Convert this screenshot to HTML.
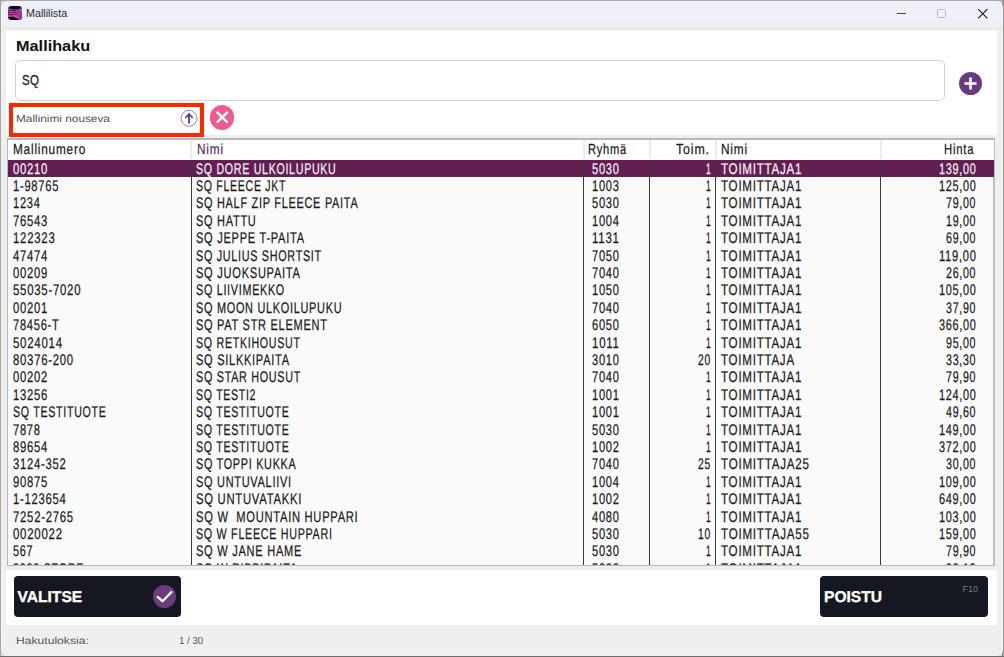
<!DOCTYPE html>
<html><head><meta charset="utf-8">
<style>
*{margin:0;padding:0;box-sizing:border-box}
html,body{width:1004px;height:657px;overflow:hidden;background:#d8d8d8;font-family:"Liberation Sans",sans-serif}
#bgtop{position:absolute;left:0;top:0;width:1004px;height:1px;background:#a8a8a6}
#bgleft{position:absolute;left:0;top:0;width:1px;height:657px;background:#a9a49e}
#bgright{position:absolute;left:1002px;top:0;width:2px;height:657px;background:#9c968e}
#bgbot{position:absolute;left:0;top:656px;width:1004px;height:1px;background:#6e6e6e}
#win{position:absolute;left:1px;top:1px;width:1001.5px;height:655px;background:#efefef;border:1px solid #f4f4f4;border-top-color:#f2f4fa;border-radius:7px;overflow:hidden}
#title{position:absolute;left:0;top:0;width:1001px;height:25px;background:linear-gradient(#eef1f9 0,#eef1f9 18px,#eef0f5 20px,#eef0f5 100%)}
#icon{position:absolute;left:8px;top:6px;width:14px;height:14px;border-radius:3.5px;background:#0c0c0c;overflow:hidden}
#ttext{position:absolute;left:25.9px;top:5.3px;font-size:11.2px;color:#2a2a2a;line-height:16px;transform:scaleX(0.96);transform-origin:0 0}
.white{position:absolute;background:#fff}
#hak{position:absolute;left:15.8px;top:37.0px;font-size:15.5px;font-weight:bold;color:#111;line-height:18px;transform:scaleX(1.05);transform-origin:0 0}
#inp{position:absolute;left:14.5px;top:59.5px;width:930px;height:41px;border:1px solid #d4d4d4;border-radius:5px;background:#fff}
#inptext{position:absolute;left:21.6px;top:71px;font-size:15px;color:#222;line-height:18px;transform:scaleX(0.77);transform-origin:0 0;-webkit-text-stroke:0.3px #222;letter-spacing:0.5px}
.circ{position:absolute;border-radius:50%}
#plus{left:959.2px;top:72.4px;width:23px;height:23px;background:#6a3a7e}
#sortbox{position:absolute;left:9px;top:103px;width:195px;height:34px;border:4px solid #ff2600;background:#fff}
#sorttext{position:absolute;left:16.4px;top:113.2px;font-size:10.2px;color:#505050;line-height:13px;transform:scaleX(1.16);transform-origin:0 0;text-rendering:geometricPrecision}
#pink{left:209.6px;top:105.3px;width:24.5px;height:24.5px;background:#ee5a93}
#table{position:absolute;left:7.0px;top:138px;width:988.0px;height:428px;background:#fafafa;border:1px solid #b4b8bd;border-top:2px solid #b5b8bc;border-right:2px solid #bcc0c5;overflow:hidden}
#hdrbg{position:absolute;left:8.0px;top:140px;width:986.0px;height:19.5px;background:#fff}
.selrow{position:absolute;left:8.0px;width:986.0px;background:#631e52}
.t{position:absolute;font-size:15.4px;line-height:17.217px;color:#1a1a1a;white-space:nowrap;transform-origin:0 0;-webkit-text-stroke:0.25px currentColor;text-rendering:geometricPrecision}
.hdiv{position:absolute;top:140px;height:19px;width:2px;background:#ececec}
.bdiv{position:absolute;top:159.5px;height:405.5px;width:1px;background:#3a3a3a}
.btn{position:absolute;top:576px;height:41px;background:#151820;border-radius:4px}
.btext{position:absolute;top:589.4px;font-size:15.6px;font-weight:bold;color:#fff;line-height:18px;text-rendering:geometricPrecision;-webkit-text-stroke:0.3px #fff;transform:scaleX(1.0);transform-origin:0 0}
#foot1{position:absolute;left:16.3px;top:635px;font-size:10.2px;color:#555;line-height:13px;transform:scaleX(1.19);transform-origin:0 0;text-rendering:geometricPrecision}
#foot2{position:absolute;left:179px;top:635px;font-size:10.2px;color:#555;line-height:13px;transform:scaleX(0.95);transform-origin:0 0;text-rendering:geometricPrecision}
#cliptable{position:absolute;left:0;top:0;width:1004px;height:657px;clip-path:inset(140px 9px 92px 8px)}
</style></head><body>
<div id="bgtop"></div><div id="bgleft"></div><div id="bgright"></div><div id="bgbot"></div>
<div id="win">
  <div id="title"></div>
</div>
<div id="icon">
 <svg width="14" height="14" viewBox="0 0 14 14">
  <defs><linearGradient id="ig" x1="0" y1="0" x2="1" y2="0"><stop offset="0" stop-color="#c63c94"/><stop offset="0.5" stop-color="#c94ab8"/><stop offset="1" stop-color="#a845c8"/></linearGradient></defs>
  <path d="M0 2 Q7 5.5 14 2 L14 14 L11.5 14 Q8 11 5 11 L0 11 Z" fill="url(#ig)"/>
  <g stroke="#2a0a28" stroke-width="0.7" fill="none" opacity="0.85">
   <path d="M0 4.5 H7 M0 6.5 H8 M0 8.5 H8.5"/>
   <path d="M5 4 L13 13 M7 3.8 L14 11.5 M9.5 3.6 L14 8.5 M3 9.5 L9 14"/>
  </g>
 </svg>
</div>
<div id="ttext">Mallilista</div>
<svg style="position:absolute;left:0;top:0" width="1004" height="30">
  <line x1="897" y1="13.5" x2="906" y2="13.5" stroke="#444" stroke-width="1"/>
  <rect x="937.5" y="9.5" width="8" height="8" rx="1" fill="none" stroke="#b8b8b8" stroke-width="1"/>
  <path d="M978.2 9.2 L987.4 18.4 M987.4 9.2 L978.2 18.4" stroke="#1a1a1a" stroke-width="1.15"/>
</svg>
<div style="position:absolute;left:2px;top:27px;width:1000px;height:3px;background:#e9e9e9"></div>
<div class="white" style="left:6px;top:30px;width:991px;height:105px"></div>
<div class="white" style="left:6px;top:570px;width:991px;height:55px"></div>
<div id="hak">Mallihaku</div>
<div id="inp"></div>
<div id="inptext">SQ</div>
<div class="circ" id="plus"></div>
<svg style="position:absolute;left:959.2px;top:72.4px" width="23" height="23"><path d="M11.5 5.5 V17.5 M5.5 11.5 H17.5" stroke="#fff" stroke-width="2.6"/></svg>
<div id="sortbox"></div>
<div id="sorttext">Mallinimi nouseva</div>
<svg style="position:absolute;left:179px;top:108px" width="20" height="20">
  <circle cx="10" cy="10.3" r="8" fill="none" stroke="#9a86c0" stroke-width="1"/>
  <path d="M10 15.5 V6.5" stroke="#5a3a94" stroke-width="1.8"/>
  <path d="M6.3 10 L10 6 L13.7 10" fill="none" stroke="#5a3a94" stroke-width="1.8"/>
</svg>
<div class="circ" id="pink"></div>
<svg style="position:absolute;left:209.6px;top:105.3px" width="24.5" height="24.5"><path d="M6.8 6.8 L17.7 17.7 M17.7 6.8 L6.8 17.7" stroke="#fff" stroke-width="2.4"/></svg>
<div id="table"></div>
<div id="hdrbg"></div>
<div class="selrow" style="top:159.6px;height:17.0px"></div>
<div class="hdiv" style="left:190px"></div><div class="bdiv" style="left:190.5px"></div><div class="hdiv" style="left:582.5px"></div><div class="bdiv" style="left:583.0px"></div><div class="hdiv" style="left:648.5px"></div><div class="bdiv" style="left:649.0px"></div><div class="hdiv" style="left:714.5px"></div><div class="bdiv" style="left:715.0px"></div><div class="hdiv" style="left:879.5px"></div><div class="bdiv" style="left:880.0px"></div>
<div id="cliptable">
<div class="t" style="left:13.20px;top:160.55px;transform:scaleX(0.7334);letter-spacing:1.0px;color:#f4f0f4;">00210</div>
<div class="t" style="left:196.40px;top:160.55px;transform:scaleX(0.6926);letter-spacing:1.0px;color:#f4f0f4;">SQ DORE ULKOILUPUKU</div>
<div class="t" style="left:591.50px;top:160.55px;transform:scaleX(0.7230);letter-spacing:1.0px;color:#f4f0f4;">5030</div>
<div class="t" style="left:705.86px;top:160.55px;transform:scaleX(0.5537);letter-spacing:1.0px;color:#f4f0f4;">1</div>
<div class="t" style="left:721.00px;top:160.55px;transform:scaleX(0.7528);letter-spacing:1.0px;color:#f4f0f4;">TOIMITTAJA1</div>
<div class="t" style="left:938.57px;top:160.55px;transform:scaleX(0.7087);letter-spacing:1.0px;color:#f4f0f4;">139,00</div>
<div class="t" style="left:13.20px;top:177.95px;transform:scaleX(0.7259);letter-spacing:1.0px;">1-98765</div>
<div class="t" style="left:196.40px;top:177.95px;transform:scaleX(0.6885);letter-spacing:1.0px;">SQ FLEECE JKT</div>
<div class="t" style="left:591.50px;top:177.95px;transform:scaleX(0.7230);letter-spacing:1.0px;">1003</div>
<div class="t" style="left:705.86px;top:177.95px;transform:scaleX(0.5537);letter-spacing:1.0px;">1</div>
<div class="t" style="left:721.00px;top:177.95px;transform:scaleX(0.7528);letter-spacing:1.0px;">TOIMITTAJA1</div>
<div class="t" style="left:938.57px;top:177.95px;transform:scaleX(0.7087);letter-spacing:1.0px;">125,00</div>
<div class="t" style="left:13.20px;top:195.35px;transform:scaleX(0.7230);letter-spacing:1.0px;">1234</div>
<div class="t" style="left:196.40px;top:195.35px;transform:scaleX(0.7112);letter-spacing:1.0px;">SQ HALF ZIP FLEECE PAITA</div>
<div class="t" style="left:591.50px;top:195.35px;transform:scaleX(0.7230);letter-spacing:1.0px;">5030</div>
<div class="t" style="left:705.86px;top:195.35px;transform:scaleX(0.5537);letter-spacing:1.0px;">1</div>
<div class="t" style="left:721.00px;top:195.35px;transform:scaleX(0.7528);letter-spacing:1.0px;">TOIMITTAJA1</div>
<div class="t" style="left:945.97px;top:195.35px;transform:scaleX(0.6943);letter-spacing:1.0px;">79,00</div>
<div class="t" style="left:13.20px;top:212.75px;transform:scaleX(0.7334);letter-spacing:1.0px;">76543</div>
<div class="t" style="left:196.40px;top:212.75px;transform:scaleX(0.7140);letter-spacing:1.0px;">SQ HATTU</div>
<div class="t" style="left:591.50px;top:212.75px;transform:scaleX(0.7230);letter-spacing:1.0px;">1004</div>
<div class="t" style="left:705.86px;top:212.75px;transform:scaleX(0.5537);letter-spacing:1.0px;">1</div>
<div class="t" style="left:721.00px;top:212.75px;transform:scaleX(0.7528);letter-spacing:1.0px;">TOIMITTAJA1</div>
<div class="t" style="left:945.97px;top:212.75px;transform:scaleX(0.6943);letter-spacing:1.0px;">19,00</div>
<div class="t" style="left:13.20px;top:230.15px;transform:scaleX(0.7403);letter-spacing:1.0px;">122323</div>
<div class="t" style="left:196.40px;top:230.15px;transform:scaleX(0.7197);letter-spacing:1.0px;">SQ JEPPE T-PAITA</div>
<div class="t" style="left:591.50px;top:230.15px;transform:scaleX(0.7462);letter-spacing:1.0px;">1131</div>
<div class="t" style="left:705.86px;top:230.15px;transform:scaleX(0.5537);letter-spacing:1.0px;">1</div>
<div class="t" style="left:721.00px;top:230.15px;transform:scaleX(0.7528);letter-spacing:1.0px;">TOIMITTAJA1</div>
<div class="t" style="left:945.97px;top:230.15px;transform:scaleX(0.6943);letter-spacing:1.0px;">69,00</div>
<div class="t" style="left:13.20px;top:247.55px;transform:scaleX(0.7334);letter-spacing:1.0px;">47474</div>
<div class="t" style="left:196.40px;top:247.55px;transform:scaleX(0.7016);letter-spacing:1.0px;">SQ JULIUS SHORTSIT</div>
<div class="t" style="left:591.50px;top:247.55px;transform:scaleX(0.7230);letter-spacing:1.0px;">7050</div>
<div class="t" style="left:705.86px;top:247.55px;transform:scaleX(0.5537);letter-spacing:1.0px;">1</div>
<div class="t" style="left:721.00px;top:247.55px;transform:scaleX(0.7528);letter-spacing:1.0px;">TOIMITTAJA1</div>
<div class="t" style="left:938.57px;top:247.55px;transform:scaleX(0.7248);letter-spacing:1.0px;">119,00</div>
<div class="t" style="left:13.20px;top:264.95px;transform:scaleX(0.7334);letter-spacing:1.0px;">00209</div>
<div class="t" style="left:196.40px;top:264.95px;transform:scaleX(0.7211);letter-spacing:1.0px;">SQ JUOKSUPAITA</div>
<div class="t" style="left:591.50px;top:264.95px;transform:scaleX(0.7230);letter-spacing:1.0px;">7040</div>
<div class="t" style="left:705.86px;top:264.95px;transform:scaleX(0.5537);letter-spacing:1.0px;">1</div>
<div class="t" style="left:721.00px;top:264.95px;transform:scaleX(0.7528);letter-spacing:1.0px;">TOIMITTAJA1</div>
<div class="t" style="left:945.97px;top:264.95px;transform:scaleX(0.6943);letter-spacing:1.0px;">26,00</div>
<div class="t" style="left:13.20px;top:282.35px;transform:scaleX(0.7410);letter-spacing:1.0px;">55035-7020</div>
<div class="t" style="left:196.40px;top:282.35px;transform:scaleX(0.7017);letter-spacing:1.0px;">SQ LIIVIMEKKO</div>
<div class="t" style="left:591.50px;top:282.35px;transform:scaleX(0.7230);letter-spacing:1.0px;">1050</div>
<div class="t" style="left:705.86px;top:282.35px;transform:scaleX(0.5537);letter-spacing:1.0px;">1</div>
<div class="t" style="left:721.00px;top:282.35px;transform:scaleX(0.7528);letter-spacing:1.0px;">TOIMITTAJA1</div>
<div class="t" style="left:938.57px;top:282.35px;transform:scaleX(0.7087);letter-spacing:1.0px;">105,00</div>
<div class="t" style="left:13.20px;top:299.75px;transform:scaleX(0.7334);letter-spacing:1.0px;">00201</div>
<div class="t" style="left:196.40px;top:299.75px;transform:scaleX(0.7089);letter-spacing:1.0px;">SQ MOON ULKOILUPUKU</div>
<div class="t" style="left:591.50px;top:299.75px;transform:scaleX(0.7230);letter-spacing:1.0px;">7040</div>
<div class="t" style="left:705.86px;top:299.75px;transform:scaleX(0.5537);letter-spacing:1.0px;">1</div>
<div class="t" style="left:721.00px;top:299.75px;transform:scaleX(0.7528);letter-spacing:1.0px;">TOIMITTAJA1</div>
<div class="t" style="left:945.97px;top:299.75px;transform:scaleX(0.6943);letter-spacing:1.0px;">37,90</div>
<div class="t" style="left:13.20px;top:317.15px;transform:scaleX(0.7235);letter-spacing:1.0px;">78456-T</div>
<div class="t" style="left:196.40px;top:317.15px;transform:scaleX(0.7154);letter-spacing:1.0px;">SQ PAT STR ELEMENT</div>
<div class="t" style="left:591.50px;top:317.15px;transform:scaleX(0.7230);letter-spacing:1.0px;">6050</div>
<div class="t" style="left:705.86px;top:317.15px;transform:scaleX(0.5537);letter-spacing:1.0px;">1</div>
<div class="t" style="left:721.00px;top:317.15px;transform:scaleX(0.7528);letter-spacing:1.0px;">TOIMITTAJA1</div>
<div class="t" style="left:938.57px;top:317.15px;transform:scaleX(0.7087);letter-spacing:1.0px;">366,00</div>
<div class="t" style="left:13.20px;top:334.55px;transform:scaleX(0.7452);letter-spacing:1.0px;">5024014</div>
<div class="t" style="left:196.40px;top:334.55px;transform:scaleX(0.6942);letter-spacing:1.0px;">SQ RETKIHOUSUT</div>
<div class="t" style="left:591.50px;top:334.55px;transform:scaleX(0.7462);letter-spacing:1.0px;">1011</div>
<div class="t" style="left:705.86px;top:334.55px;transform:scaleX(0.5537);letter-spacing:1.0px;">1</div>
<div class="t" style="left:721.00px;top:334.55px;transform:scaleX(0.7528);letter-spacing:1.0px;">TOIMITTAJA1</div>
<div class="t" style="left:945.97px;top:334.55px;transform:scaleX(0.6943);letter-spacing:1.0px;">95,00</div>
<div class="t" style="left:13.20px;top:351.95px;transform:scaleX(0.7372);letter-spacing:1.0px;">80376-200</div>
<div class="t" style="left:196.40px;top:351.95px;transform:scaleX(0.7176);letter-spacing:1.0px;">SQ SILKKIPAITA</div>
<div class="t" style="left:591.50px;top:351.95px;transform:scaleX(0.7230);letter-spacing:1.0px;">3010</div>
<div class="t" style="left:698.46px;top:351.95px;transform:scaleX(0.6699);letter-spacing:1.0px;">20</div>
<div class="t" style="left:721.00px;top:351.95px;transform:scaleX(0.7507);letter-spacing:1.0px;">TOIMITTAJA</div>
<div class="t" style="left:945.97px;top:351.95px;transform:scaleX(0.6943);letter-spacing:1.0px;">33,30</div>
<div class="t" style="left:13.20px;top:369.35px;transform:scaleX(0.7334);letter-spacing:1.0px;">00202</div>
<div class="t" style="left:196.40px;top:369.35px;transform:scaleX(0.7020);letter-spacing:1.0px;">SQ STAR HOUSUT</div>
<div class="t" style="left:591.50px;top:369.35px;transform:scaleX(0.7230);letter-spacing:1.0px;">7040</div>
<div class="t" style="left:705.86px;top:369.35px;transform:scaleX(0.5537);letter-spacing:1.0px;">1</div>
<div class="t" style="left:721.00px;top:369.35px;transform:scaleX(0.7528);letter-spacing:1.0px;">TOIMITTAJA1</div>
<div class="t" style="left:945.97px;top:369.35px;transform:scaleX(0.6943);letter-spacing:1.0px;">79,90</div>
<div class="t" style="left:13.20px;top:386.75px;transform:scaleX(0.7334);letter-spacing:1.0px;">13256</div>
<div class="t" style="left:196.40px;top:386.75px;transform:scaleX(0.6888);letter-spacing:1.0px;">SQ TESTI2</div>
<div class="t" style="left:591.50px;top:386.75px;transform:scaleX(0.7230);letter-spacing:1.0px;">1001</div>
<div class="t" style="left:705.86px;top:386.75px;transform:scaleX(0.5537);letter-spacing:1.0px;">1</div>
<div class="t" style="left:721.00px;top:386.75px;transform:scaleX(0.7528);letter-spacing:1.0px;">TOIMITTAJA1</div>
<div class="t" style="left:938.57px;top:386.75px;transform:scaleX(0.7087);letter-spacing:1.0px;">124,00</div>
<div class="t" style="left:13.20px;top:404.15px;transform:scaleX(0.6934);letter-spacing:1.0px;">SQ TESTITUOTE</div>
<div class="t" style="left:196.40px;top:404.15px;transform:scaleX(0.6934);letter-spacing:1.0px;">SQ TESTITUOTE</div>
<div class="t" style="left:591.50px;top:404.15px;transform:scaleX(0.7230);letter-spacing:1.0px;">1001</div>
<div class="t" style="left:705.86px;top:404.15px;transform:scaleX(0.5537);letter-spacing:1.0px;">1</div>
<div class="t" style="left:721.00px;top:404.15px;transform:scaleX(0.7528);letter-spacing:1.0px;">TOIMITTAJA1</div>
<div class="t" style="left:945.97px;top:404.15px;transform:scaleX(0.6943);letter-spacing:1.0px;">49,60</div>
<div class="t" style="left:13.20px;top:421.55px;transform:scaleX(0.7230);letter-spacing:1.0px;">7878</div>
<div class="t" style="left:196.40px;top:421.55px;transform:scaleX(0.6934);letter-spacing:1.0px;">SQ TESTITUOTE</div>
<div class="t" style="left:591.50px;top:421.55px;transform:scaleX(0.7230);letter-spacing:1.0px;">5030</div>
<div class="t" style="left:705.86px;top:421.55px;transform:scaleX(0.5537);letter-spacing:1.0px;">1</div>
<div class="t" style="left:721.00px;top:421.55px;transform:scaleX(0.7528);letter-spacing:1.0px;">TOIMITTAJA1</div>
<div class="t" style="left:938.57px;top:421.55px;transform:scaleX(0.7087);letter-spacing:1.0px;">149,00</div>
<div class="t" style="left:13.20px;top:438.95px;transform:scaleX(0.7334);letter-spacing:1.0px;">89654</div>
<div class="t" style="left:196.40px;top:438.95px;transform:scaleX(0.6934);letter-spacing:1.0px;">SQ TESTITUOTE</div>
<div class="t" style="left:591.50px;top:438.95px;transform:scaleX(0.7230);letter-spacing:1.0px;">1002</div>
<div class="t" style="left:705.86px;top:438.95px;transform:scaleX(0.5537);letter-spacing:1.0px;">1</div>
<div class="t" style="left:721.00px;top:438.95px;transform:scaleX(0.7528);letter-spacing:1.0px;">TOIMITTAJA1</div>
<div class="t" style="left:938.57px;top:438.95px;transform:scaleX(0.7087);letter-spacing:1.0px;">372,00</div>
<div class="t" style="left:13.20px;top:456.35px;transform:scaleX(0.7323);letter-spacing:1.0px;">3124-352</div>
<div class="t" style="left:196.40px;top:456.35px;transform:scaleX(0.7046);letter-spacing:1.0px;">SQ TOPPI KUKKA</div>
<div class="t" style="left:591.50px;top:456.35px;transform:scaleX(0.7230);letter-spacing:1.0px;">7040</div>
<div class="t" style="left:698.46px;top:456.35px;transform:scaleX(0.6699);letter-spacing:1.0px;">25</div>
<div class="t" style="left:721.00px;top:456.35px;transform:scaleX(0.7546);letter-spacing:1.0px;">TOIMITTAJA25</div>
<div class="t" style="left:945.97px;top:456.35px;transform:scaleX(0.6943);letter-spacing:1.0px;">30,00</div>
<div class="t" style="left:13.20px;top:473.75px;transform:scaleX(0.7334);letter-spacing:1.0px;">90875</div>
<div class="t" style="left:196.40px;top:473.75px;transform:scaleX(0.7128);letter-spacing:1.0px;">SQ UNTUVALIIVI</div>
<div class="t" style="left:591.50px;top:473.75px;transform:scaleX(0.7230);letter-spacing:1.0px;">1004</div>
<div class="t" style="left:705.86px;top:473.75px;transform:scaleX(0.5537);letter-spacing:1.0px;">1</div>
<div class="t" style="left:721.00px;top:473.75px;transform:scaleX(0.7528);letter-spacing:1.0px;">TOIMITTAJA1</div>
<div class="t" style="left:938.57px;top:473.75px;transform:scaleX(0.7087);letter-spacing:1.0px;">109,00</div>
<div class="t" style="left:13.20px;top:491.15px;transform:scaleX(0.7323);letter-spacing:1.0px;">1-123654</div>
<div class="t" style="left:196.40px;top:491.15px;transform:scaleX(0.7324);letter-spacing:1.0px;">SQ UNTUVATAKKI</div>
<div class="t" style="left:591.50px;top:491.15px;transform:scaleX(0.7230);letter-spacing:1.0px;">1002</div>
<div class="t" style="left:705.86px;top:491.15px;transform:scaleX(0.5537);letter-spacing:1.0px;">1</div>
<div class="t" style="left:721.00px;top:491.15px;transform:scaleX(0.7528);letter-spacing:1.0px;">TOIMITTAJA1</div>
<div class="t" style="left:938.57px;top:491.15px;transform:scaleX(0.7087);letter-spacing:1.0px;">649,00</div>
<div class="t" style="left:13.20px;top:508.55px;transform:scaleX(0.7372);letter-spacing:1.0px;">7252-2765</div>
<div class="t" style="left:196.40px;top:508.55px;transform:scaleX(0.7249);letter-spacing:1.0px;">SQ W&nbsp; MOUNTAIN HUPPARI</div>
<div class="t" style="left:591.50px;top:508.55px;transform:scaleX(0.7230);letter-spacing:1.0px;">4080</div>
<div class="t" style="left:705.86px;top:508.55px;transform:scaleX(0.5537);letter-spacing:1.0px;">1</div>
<div class="t" style="left:721.00px;top:508.55px;transform:scaleX(0.7528);letter-spacing:1.0px;">TOIMITTAJA1</div>
<div class="t" style="left:938.57px;top:508.55px;transform:scaleX(0.7087);letter-spacing:1.0px;">103,00</div>
<div class="t" style="left:13.20px;top:525.95px;transform:scaleX(0.7452);letter-spacing:1.0px;">0020022</div>
<div class="t" style="left:196.40px;top:525.95px;transform:scaleX(0.6980);letter-spacing:1.0px;">SQ W FLEECE HUPPARI</div>
<div class="t" style="left:591.50px;top:525.95px;transform:scaleX(0.7230);letter-spacing:1.0px;">5030</div>
<div class="t" style="left:698.46px;top:525.95px;transform:scaleX(0.6699);letter-spacing:1.0px;">10</div>
<div class="t" style="left:721.00px;top:525.95px;transform:scaleX(0.7546);letter-spacing:1.0px;">TOIMITTAJA55</div>
<div class="t" style="left:938.57px;top:525.95px;transform:scaleX(0.7087);letter-spacing:1.0px;">159,00</div>
<div class="t" style="left:13.20px;top:543.35px;transform:scaleX(0.7058);letter-spacing:1.0px;">567</div>
<div class="t" style="left:196.40px;top:543.35px;transform:scaleX(0.7200);letter-spacing:1.0px;">SQ W JANE HAME</div>
<div class="t" style="left:591.50px;top:543.35px;transform:scaleX(0.7230);letter-spacing:1.0px;">5030</div>
<div class="t" style="left:705.86px;top:543.35px;transform:scaleX(0.5537);letter-spacing:1.0px;">1</div>
<div class="t" style="left:721.00px;top:543.35px;transform:scaleX(0.7528);letter-spacing:1.0px;">TOIMITTAJA1</div>
<div class="t" style="left:945.97px;top:543.35px;transform:scaleX(0.6943);letter-spacing:1.0px;">79,90</div>
<div class="t" style="left:13.20px;top:560.75px;transform:scaleX(0.7035);letter-spacing:1.0px;">0000 STORE</div>
<div class="t" style="left:196.40px;top:560.75px;transform:scaleX(0.7132);letter-spacing:1.0px;">SQ W RIBBIPAITA</div>
<div class="t" style="left:591.50px;top:560.75px;transform:scaleX(0.7230);letter-spacing:1.0px;">5030</div>
<div class="t" style="left:705.86px;top:560.75px;transform:scaleX(0.5537);letter-spacing:1.0px;">1</div>
<div class="t" style="left:721.00px;top:560.75px;transform:scaleX(0.7528);letter-spacing:1.0px;">TOIMITTAJA1</div>
<div class="t" style="left:945.97px;top:560.75px;transform:scaleX(0.6943);letter-spacing:1.0px;">99,10</div>
<div class="t" style="left:12.90px;top:141.97px;transform:scaleX(0.8066);letter-spacing:1.0px;font-size:14.6px;line-height:16.323px;">Mallinumero</div>
<div class="t" style="left:196.90px;top:141.97px;transform:scaleX(0.8106);letter-spacing:1.0px;font-size:14.6px;line-height:16.323px;color:#62305e;">Nimi</div>
<div class="t" style="left:587.80px;top:141.97px;transform:scaleX(0.7621);letter-spacing:1.0px;font-size:14.6px;line-height:16.323px;">Ryhmä</div>
<div class="t" style="left:676.00px;top:141.97px;transform:scaleX(0.8488);letter-spacing:1.0px;font-size:14.6px;line-height:16.323px;">Toim.</div>
<div class="t" style="left:721.00px;top:141.97px;transform:scaleX(0.8106);letter-spacing:1.0px;font-size:14.6px;line-height:16.323px;">Nimi</div>
<div class="t" style="left:944.40px;top:141.97px;transform:scaleX(0.7771);letter-spacing:1.0px;font-size:14.6px;line-height:16.323px;">Hinta</div>
</div>
<div class="btn" style="left:13.5px;width:167.5px"></div>
<div class="btext" style="left:17.5px">VALITSE</div>
<div class="circ" style="left:153px;top:584.5px;width:23px;height:23px;background:#6b3d7d"></div>
<svg style="position:absolute;left:153px;top:584.5px" width="23" height="23"><path d="M4.7 11.9 L9.5 16.2 L18.5 7" fill="none" stroke="#fff" stroke-width="2.3" stroke-linecap="round" stroke-linejoin="round"/></svg>
<div class="btn" style="left:820px;width:167.5px"></div>
<div class="btext" style="left:824px">POISTU</div>
<div style="position:absolute;left:962.5px;top:584px;font-size:9px;color:#7a7a7a;line-height:10px">F10</div>
<div id="foot1">Hakutuloksia:</div>
<div id="foot2">1 / 30</div>
</body></html>
